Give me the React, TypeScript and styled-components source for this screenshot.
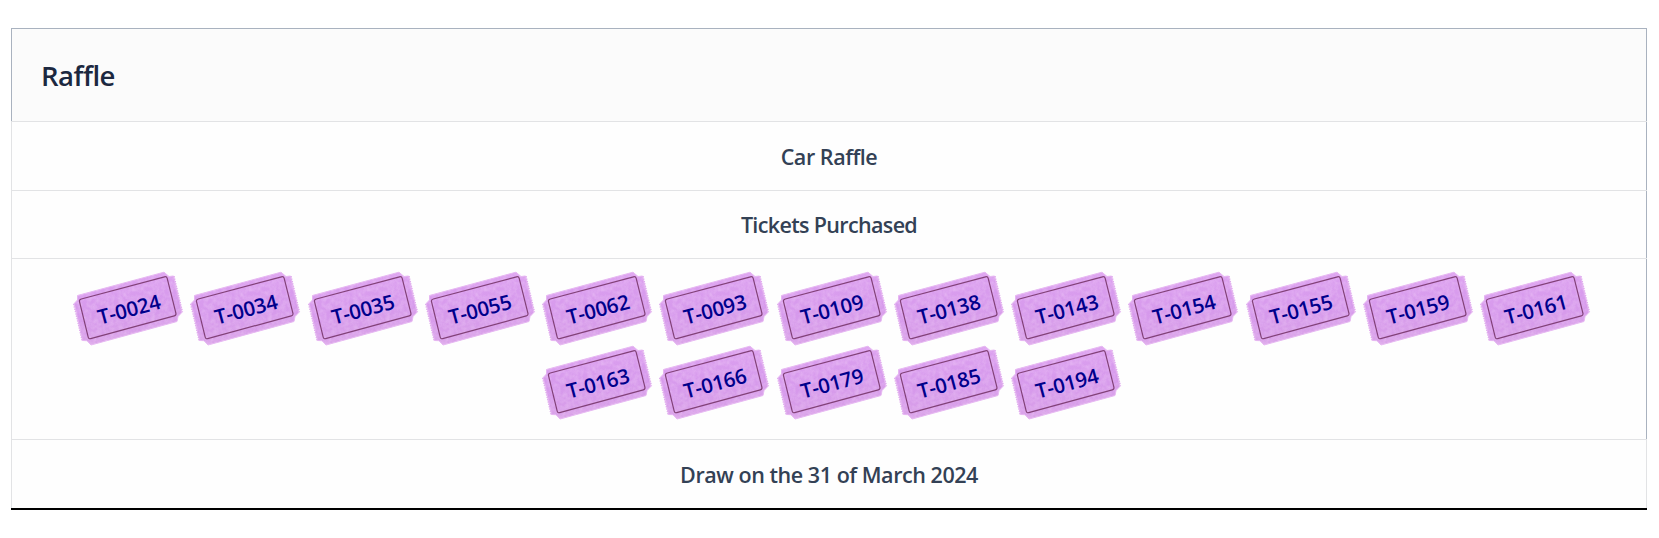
import React from 'react';
import styled, { createGlobalStyle } from 'styled-components';

const Global = createGlobalStyle`
  * { box-sizing: border-box; }
  body { margin: 0; background: #fff; font-family: "Segoe UI", "Open Sans", "Noto Sans", sans-serif; }
`;

const Page = styled.main`
  padding: 28px 12px 28px 11px;
`;

const Card = styled.section`
  border-bottom: 2px solid #000;
`;

const Row = styled.div<{ $h: number; $left?: string; $right?: string }>`
  height: ${p => p.$h}px;
  display: flex;
  align-items: center;
  justify-content: center;
  background: #fefefe;
  border: 0 solid #e2e3e5;
  border-left: 1px solid ${p => p.$left ?? '#e2e3e5'};
  border-right: 1px solid ${p => p.$right ?? '#a9b2bf'};
`;

const Rule = styled.div`
  height: 1px;
  background: #e2e3e5;
`;

const Header = styled(Row)`
  justify-content: flex-start;
  padding: 2px 0 0 29px;
  background: #fbfbfb;
  border-top: 1px solid #a9b2bf;
`;

const Title = styled.h1`
  margin: 0;
  font-size: 27.5px;
  line-height: 36px;
  font-weight: 600;
  letter-spacing: -0.5px;
  font-variant-ligatures: none;
  color: #1c2840;
  white-space: nowrap;
`;

const Label = styled.span<{ $tracking?: number }>`
  padding-top: 1px;
  font-size: 21.5px;
  line-height: 30px;
  font-weight: 600;
  letter-spacing: ${p => p.$tracking ?? -0.45}px;
  color: #334155;
  white-space: nowrap;
`;

const TicketRow = styled(Row)`
  align-items: flex-start;
  padding: 10px 0 0 4px;
`;

const TicketList = styled.ul`
  list-style: none;
  margin: 0;
  padding: 0;
  width: 1525px;
  display: flex;
  flex-wrap: wrap;
  justify-content: center;
`;

const TicketItem = styled.li`
  width: 117.25px;
  height: 74px;
  display: grid;
  place-items: center;
  > * { grid-area: 1 / 1; }
`;

const TicketArt = styled.svg`
  width: 117px;
  height: 80px;
  overflow: visible;
`;

const TicketNumber = styled.span`
  padding-left: 2px;
  font-size: 20.5px;
  line-height: 24px;
  font-weight: 600;
  letter-spacing: -0.2px;
  color: #00008b;
  transform: rotate(-15deg);
`;

const tickets = [
  'T-0024', 'T-0034', 'T-0035', 'T-0055', 'T-0062', 'T-0093', 'T-0109', 'T-0138', 'T-0143',
  'T-0154', 'T-0155', 'T-0159', 'T-0161', 'T-0163', 'T-0166', 'T-0179', 'T-0185', 'T-0194',
];

const outline =
  'M8.5 26.5L95 3.2L100 7.5L104.5 7L113 43.3L109 47.5L108 52.5L22 76L18 71.7L13.5 71.5L5.2 34.5L8.5 31Z';

/* Paper colour and grain shared by every ticket. */
const TicketDefs = () => (
  <svg width="0" height="0" style={{ display: 'block' }} aria-hidden="true">
    <defs>
      <linearGradient id="paper" x1="0.4" y1="0" x2="0.6" y2="1">
        <stop offset="0" stopColor="#dda2f0" />
        <stop offset="0.5" stopColor="#d699ec" />
        <stop offset="1" stopColor="#d9a2e7" />
      </linearGradient>
      <filter id="grain" x="0" y="0" width="1" height="1">
        <feTurbulence type="fractalNoise" baseFrequency="0.22" numOctaves="3" seed="4" />
        <feColorMatrix values="0 0 0 0 1  0 0 0 0 0.82  0 0 0 0 1  0.8 0 0 0 -0.25" />
        <feComposite in2="SourceGraphic" operator="in" />
      </filter>
    </defs>
  </svg>
);

const Ticket = ({ code }: { code: string }) => (
  <TicketItem>
    <TicketArt viewBox="0 0 117 80" aria-hidden="true">
      <path d={outline} fill="url(#paper)" stroke="#e6b6f2" strokeWidth="1" strokeLinejoin="round" />
      <path d={outline} fill="#fff" filter="url(#grain)" opacity="0.6" />
      <path d="M4.7 35L13.2 71.3M105 7.3L113.4 43" fill="none" stroke="#e0abee" strokeWidth="1.6" strokeDasharray="1.2 1.2" />
      <path
        d="M12.3 30L95.5 7.8Q97.7 7.3 98.2 9.3L106.9 44.2Q107.4 46.3 105.3 46.9L21.7 69.6Q19.7 70.2 19.2 68.1L10.5 32.7Q10 30.6 12.3 30Z"
        fill="none"
        stroke="#824178"
        strokeWidth="1.2"
      />
    </TicketArt>
    <TicketNumber>{code}</TicketNumber>
  </TicketItem>
);

export default function App() {
  return (
    <Page>
      <Global />
      <TicketDefs />
      <Card>
        <Header $h={93} $left="#a9b2bf"><Title>Raffle</Title></Header>
        <Rule />
        <Row $h={68}><Label>Car Raffle</Label></Row>
        <Rule />
        <Row $h={67}><Label $tracking={-0.65}>Tickets Purchased</Label></Row>
        <Rule />
        <TicketRow $h={180}>
          <TicketList>{tickets.map(code => <Ticket key={code} code={code} />)}</TicketList>
        </TicketRow>
        <Rule />
        <Row $h={68} $right="#e2e3e5"><Label>Draw on the 31 of March 2024</Label></Row>
      </Card>
    </Page>
  );
}
